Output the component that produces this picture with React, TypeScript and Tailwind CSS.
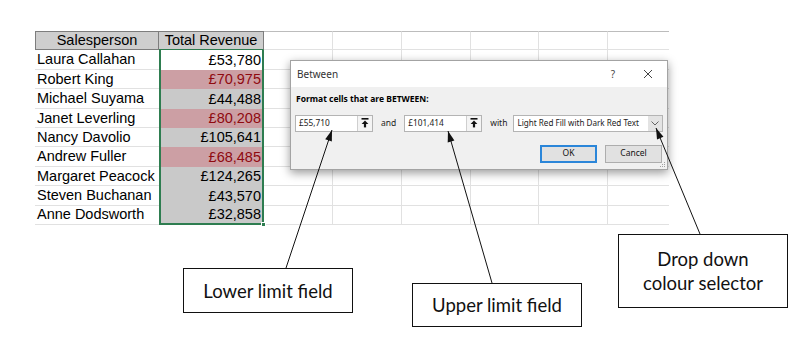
import React from 'react'

type Tone = 'active' | 'red' | 'grey'

const rows: { name: string; revenue: string; tone: Tone }[] = [
  { name: 'Laura Callahan', revenue: '£53,780', tone: 'active' },
  { name: 'Robert King', revenue: '£70,975', tone: 'red' },
  { name: 'Michael Suyama', revenue: '£44,488', tone: 'grey' },
  { name: 'Janet Leverling', revenue: '£80,208', tone: 'red' },
  { name: 'Nancy Davolio', revenue: '£105,641', tone: 'grey' },
  { name: 'Andrew Fuller', revenue: '£68,485', tone: 'red' },
  { name: 'Margaret Peacock', revenue: '£124,265', tone: 'grey' },
  { name: 'Steven Buchanan', revenue: '£43,570', tone: 'grey' },
  { name: 'Anne Dodsworth', revenue: '£32,858', tone: 'grey' },
]

// widths of the blank columns to the right of the table
const blankCols = ['w-[69px]', 'w-[69px]', 'w-[69px]', 'w-[68px]', 'w-[69px]', 'w-[61px]']

const toneClass: Record<Tone, string> = {
  active: 'bg-white text-black',
  red: 'bg-[#cc9fa4] text-[#8f0a10]',
  grey: 'bg-[#c9c9c9] text-black',
}

function BlankCells({ header }: { header?: boolean }) {
  return (
    <>
      {blankCols.map((w, i) => (
        <div
          key={i}
          className={`${w} shrink-0 border-b border-[#e1e1e1] ${
            i < blankCols.length - 1 ? 'border-r' : ''
          } ${header ? 'border-t border-t-[#bcbcbc]' : ''}`}
        />
      ))}
    </>
  )
}

function Sheet() {
  return (
    <div className="pt-[31px] pl-[35px] font-['Liberation_Sans',Arial,sans-serif] text-[14.5px] leading-none">
      <div className="flex h-[19.4px]">
        <div className="flex w-[124px] shrink-0 items-center justify-center border border-[#7d7d7d] bg-[#cecece]">
          Salesperson
        </div>
        <div className="flex w-[105px] shrink-0 items-center justify-center border-y border-r border-[#7d7d7d] border-b-[#2e7d50] bg-[#cecece]">
          Total Revenue
        </div>
        <BlankCells header />
      </div>
      {rows.map((r, i) => (
        <div key={r.name} className="flex h-[19.4px]">
          <div className="flex w-[124px] shrink-0 items-center border-b border-[#e1e1e1] pl-[2px] text-black">
            {r.name}
          </div>
          <div
            className={`relative flex w-[105px] shrink-0 items-center justify-end border-x-2 border-[#2e7d50] pr-[1px] ${
              toneClass[r.tone]
            } ${i === rows.length - 1 ? 'border-b-2' : ''}`}
          >
            {r.revenue}
            {i === rows.length - 1 && (
              <span className="absolute -right-[4px] -bottom-[4px] h-[5px] w-[5px] border border-white bg-[#2e7d50]" />
            )}
          </div>
          <BlankCells />
        </div>
      ))}
    </div>
  )
}

function PickIcon() {
  return (
    <svg width="8" height="10" viewBox="0 0 8 10">
      <rect x="0.5" y="0" width="7" height="1.6" fill="#111" />
      <polygon points="4,2.4 0.6,6 7.4,6" fill="#111" />
      <rect x="2.9" y="5.8" width="2.2" height="3.6" fill="#111" />
    </svg>
  )
}

function RangeInput({ value }: { value: string }) {
  return (
    <div className="flex h-[17px] w-[78px] shrink-0 border border-[#b4b4b4] bg-white">
      <div className="flex flex-1 items-center pl-[3px] text-[8.3px] text-[#222]">{value}</div>
      <div className="flex w-[15px] items-center justify-center border-l border-[#cfcfcf] bg-[#f4f4f4]">
        <PickIcon />
      </div>
    </div>
  )
}

function Dialog() {
  return (
    <div className="absolute left-[290px] top-[60px] flex h-[110px] w-[378px] flex-col border border-[#a3a3a3] bg-[#f0f0f0] font-['Noto_Sans',sans-serif] shadow-[0_3px_9px_rgba(0,0,0,0.4)]">
      <div className="flex h-[26px] shrink-0 items-center bg-white pl-[6px] pr-[14px] text-[10px] text-[#333]">
        <span>Between</span>
        <span className="ml-auto mr-[28px] text-[10px] text-[#444]">?</span>
        <svg width="10" height="10" viewBox="0 0 10 10">
          <path d="M1 1L9 9M9 1L1 9" stroke="#444" strokeWidth="1" />
        </svg>
      </div>
      <div className="relative flex flex-1 flex-col px-[4px]">
        <div className="mt-[6px] pl-[1px] text-[8.5px] font-bold text-black">
          Format cells that are BETWEEN:
        </div>
        <div className="mt-[9px] flex items-center text-[8.5px] text-[#222]">
          <RangeInput value="£55,710" />
          <span className="mx-[8px]">and</span>
          <RangeInput value="£101,414" />
          <span className="ml-[8px] mr-[6px]">with</span>
          <div className="flex h-[17px] w-[150px] shrink-0 border border-[#b4b4b4] bg-white">
            <div className="flex flex-1 items-center pl-[3px] text-[8.1px]">Light Red Fill with Dark Red Text</div>
            <div className="flex w-[14px] items-center justify-center bg-[#e3e3e3]">
              <svg width="8" height="5" viewBox="0 0 8 5">
                <path d="M0.5 0.5L4 4L7.5 0.5" fill="none" stroke="#555" strokeWidth="0.9" />
              </svg>
            </div>
          </div>
        </div>
        <div className="mt-[13px] flex justify-end gap-[8px] pr-[1px] text-[8.5px] text-[#111]">
          <div className="flex h-[18px] w-[57px] items-center justify-center border-2 border-[#2b86d9] bg-[#e1e1e1]">
            OK
          </div>
          <div className="flex h-[18px] w-[57px] items-center justify-center border border-[#adadad] bg-[#e1e1e1]">
            Cancel
          </div>
        </div>
        <svg className="absolute bottom-[1px] right-[1px]" width="6" height="6" viewBox="0 0 6 6">
          <rect x="4" y="0" width="1" height="1" fill="#a0a0a0" />
          <rect x="2" y="2" width="1" height="1" fill="#a0a0a0" />
          <rect x="4" y="2" width="1" height="1" fill="#a0a0a0" />
          <rect x="0" y="4" width="1" height="1" fill="#a0a0a0" />
          <rect x="2" y="4" width="1" height="1" fill="#a0a0a0" />
          <rect x="4" y="4" width="1" height="1" fill="#a0a0a0" />
        </svg>
      </div>
    </div>
  )
}

// tail and tip in page pixels; head drawn as a thin filled triangle
function arrowHead(tail: [number, number], tip: [number, number]) {
  const dx = tail[0] - tip[0]
  const dy = tail[1] - tip[1]
  const len = Math.hypot(dx, dy)
  const ux = dx / len
  const uy = dy / len
  const bx = tip[0] + ux * 11
  const by = tip[1] + uy * 11
  const nx = -uy * 3.5
  const ny = ux * 3.5
  return `${tip[0]},${tip[1]} ${bx + nx},${by + ny} ${bx - nx},${by - ny}`
}

const arrows: { tail: [number, number]; tip: [number, number] }[] = [
  { tail: [286, 268], tip: [332, 130] },
  { tail: [492, 283], tip: [448, 131] },
  { tail: [700, 234], tip: [656, 128] },
]

function Arrows() {
  return (
    <svg className="pointer-events-none absolute inset-0" width="807" height="362">
      {arrows.map((a, i) => (
        <g key={i}>
          <line x1={a.tail[0]} y1={a.tail[1]} x2={a.tip[0]} y2={a.tip[1]} stroke="#111" strokeWidth="1" />
          <polygon points={arrowHead(a.tail, a.tip)} fill="#111" />
        </g>
      ))}
    </svg>
  )
}

function Callout({ className, children }: { className: string; children: React.ReactNode }) {
  return (
    <div
      className={`absolute flex flex-col items-center justify-center border border-[#111] bg-white font-['Lato',sans-serif] text-[18.5px] leading-[24px] text-[#111] ${className}`}
    >
      {children}
    </div>
  )
}

export default function App() {
  return (
    <div className="relative h-[362px] w-[807px] overflow-hidden bg-white">
      <Sheet />
      <Dialog />
      <Arrows />
      <Callout className="left-[183px] top-[268px] h-[45px] w-[170px]">Lower limit field</Callout>
      <Callout className="left-[412px] top-[283px] h-[44px] w-[170px]">Upper limit field</Callout>
      <Callout className="left-[618px] top-[234px] h-[74px] w-[170px]">
        <span>Drop down</span>
        <span>colour selector</span>
      </Callout>
    </div>
  )
}
